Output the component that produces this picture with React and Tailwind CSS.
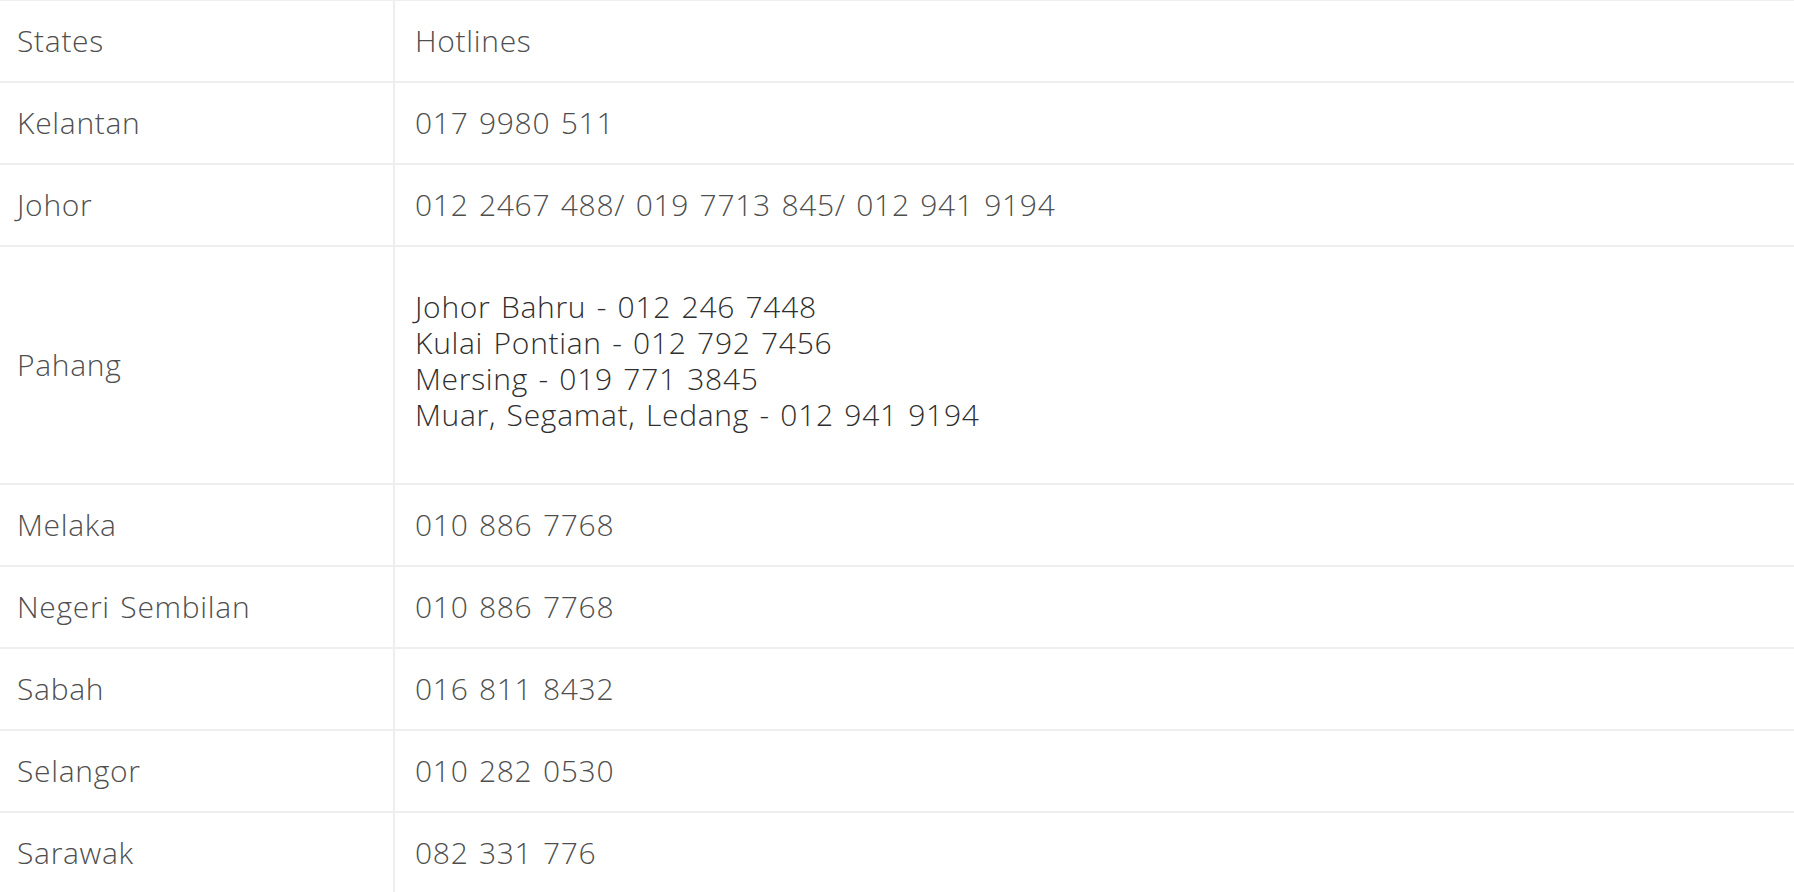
import React from 'react'

const rows = [
  { state: 'Kelantan', hotline: '017 9980 511' },
  { state: 'Johor', hotline: '012 2467 488/ 019 7713 845/ 012 941 9194' },
  {
    state: 'Pahang',
    lines: [
      'Johor Bahru - 012 246 7448',
      'Kulai Pontian - 012 792 7456',
      'Mersing - 019 771 3845',
      'Muar, Segamat, Ledang - 012 941 9194',
    ],
  },
  { state: 'Melaka', hotline: '010 886 7768' },
  { state: 'Negeri Sembilan', hotline: '010 886 7768' },
  { state: 'Sabah', hotline: '016 811 8432' },
  { state: 'Selangor', hotline: '010 282 0530' },
  { state: 'Sarawak', hotline: '082 331 776' },
]

export default function App() {
  return (
    <div className="w-full bg-white text-[#4f4f4f] font-['Open_Sans',sans-serif] font-light text-[30px] leading-[36px] tracking-[0.7px] [word-spacing:2px]">
      <div className="border-t border-[#eee]">
        <div className="grid grid-cols-[395px_1fr] h-[82px] border-b-2 border-[#eee]">
          <div className="border-r-2 border-[#eee] pl-[17px] flex items-center">States</div>
          <div className="pl-[20px] flex items-center">Hotlines</div>
        </div>
        {rows.map((r) => (
          <div
            key={r.state}
            className={
              r.lines
                ? 'grid grid-cols-[395px_1fr] h-[238px] border-b-2 border-[#eee]'
                : 'grid grid-cols-[395px_1fr] h-[82px] border-b-2 border-[#eee]'
            }
          >
            <div className="border-r-2 border-[#eee] pl-[17px] flex items-center">{r.state}</div>
            {r.lines ? (
              <div className="pl-[20px] pt-[42px] text-[#2f2f2f]">
                {r.lines.map((l) => (
                  <div key={l}>{l}</div>
                ))}
              </div>
            ) : (
              <div className="pl-[20px] flex items-center">{r.hotline}</div>
            )}
          </div>
        ))}
      </div>
    </div>
  )
}
